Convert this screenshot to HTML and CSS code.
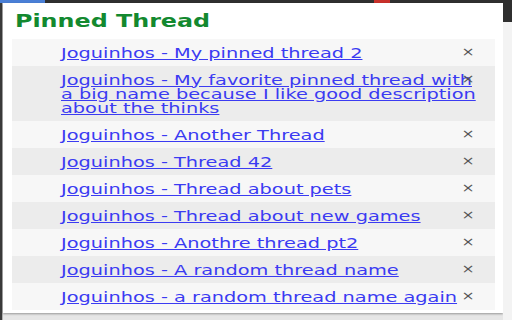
FILE: index.html
```html
<!DOCTYPE html>
<html>
<head>
<meta charset="utf-8">
<link rel="stylesheet" href="styles.css">
</head>
<body>
<div class="topbar">
  <div class="tab-blue"></div>
  <div class="tab-red"></div>
</div>
<div class="main">
  <div class="left-edge"></div>
  <div class="popup">
    <h1 class="title"><span class="wide">Pinned Thread</span></h1>
    <div class="list">
      <div class="row"><a class="link" href="#">Joguinhos - My pinned thread 2</a><span class="close">×</span></div>
      <div class="row"><a class="link" href="#">Joguinhos - My favorite pinned thread with a big name because I like good description about the thinks</a><span class="close">×</span></div>
      <div class="row"><a class="link" href="#">Joguinhos - Another Thread</a><span class="close">×</span></div>
      <div class="row"><a class="link" href="#">Joguinhos - Thread 42</a><span class="close">×</span></div>
      <div class="row"><a class="link" href="#">Joguinhos - Thread about pets</a><span class="close">×</span></div>
      <div class="row"><a class="link" href="#">Joguinhos - Thread about new games</a><span class="close">×</span></div>
      <div class="row"><a class="link" href="#">Joguinhos - Anothre thread pt2</a><span class="close">×</span></div>
      <div class="row"><a class="link" href="#">Joguinhos - A random thread name</a><span class="close">×</span></div>
      <div class="row"><a class="link" href="#">Joguinhos - a random thread name again</a><span class="close">×</span></div>
    </div>
  </div>
  <div class="right-edge"></div>
</div>
</body>
</html>
```
FILE: styles.css
```css
html, body {
  margin: 0;
  padding: 0;
}
body {
  width: 512px;
  height: 320px;
  overflow: hidden;
  background: #e6e6e6;
  font-family: "DejaVu Sans", sans-serif;
}
.topbar {
  height: 3px;
  background: #2f2f2f;
  display: flex;
}
.tab-blue {
  width: 45px;
  background: #4a7fd6;
}
.tab-red {
  width: 16px;
  margin-left: 329px;
  background: #c8302a;
}
.main {
  display: flex;
  height: 317px;
}
.left-edge {
  width: 3px;
  background: linear-gradient(to right, #3a3a3a 2px, #b0b0b0 2px);
}
.popup {
  width: 500px;
  height: 310px;
  background: #ffffff;
  box-sizing: border-box;
  padding: 8px 8px 0 9px;
  box-shadow: 0 1px 2px rgba(0, 0, 0, 0.35), 1px 0 0 #c4c4c4;
}
.right-edge {
  flex: 1;
  background: linear-gradient(#2f2f2f 19px, #f3f3f3 19px);
}
.title {
  margin: 0 0 8px 3px;
  font-size: 17px;
  line-height: 20px;
  font-weight: bold;
  color: #13892f;
}
.wide {
  display: inline-block;
  transform: scaleX(1.4);
  transform-origin: left center;
}
.row {
  position: relative;
  padding: 6.5px 0 6.5px 49px;
  line-height: 14px;
  font-size: 14px;
  background: #f7f7f7;
}
.row:nth-child(even) {
  background: #ececec;
}
.link {
  display: inline-block;
  width: 306px;
  color: #3b3bf2;
  text-decoration: underline;
  transform: scaleX(1.38);
  transform-origin: left top;
}
.close {
  position: absolute;
  right: 22px;
  top: 6px;
  font-size: 12px;
  color: #555555;
  transform: scaleX(1.3);
}
```
